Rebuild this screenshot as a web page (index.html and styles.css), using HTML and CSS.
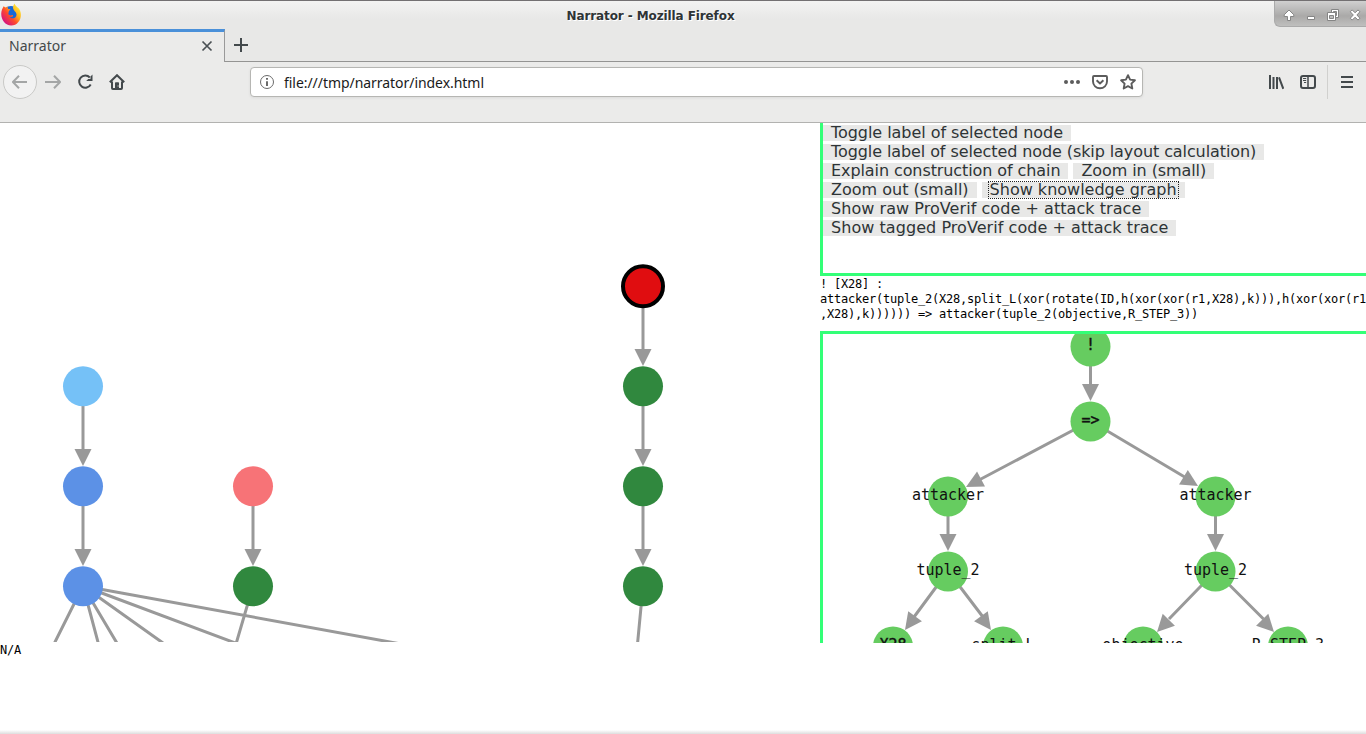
FILE: index.html
```html
<!DOCTYPE html>
<html lang="en">
<head>
<meta charset="utf-8">
<title>Narrator</title>
<link rel="stylesheet" href="styles.css">
</head>
<body>
<div class="window">
  <header class="titlebar">
    <svg class="logo" viewBox="0 0 22 27">
      <defs>
        <linearGradient id="flame" x1="0.9" y1="0.1" x2="0.15" y2="0.85">
          <stop offset="0" stop-color="#fff036"/><stop offset="0.35" stop-color="#ffb01c"/><stop offset="0.62" stop-color="#ff4a2b"/><stop offset="1" stop-color="#d5127f"/>
        </linearGradient>
      </defs>
      <circle cx="11" cy="13" r="8" fill="#1668d8"/>
      <path d="M2 8.500 3.600 5.200 5.500 6.500 7.500 5.500l.6 2.400 2.400.3-1.700 2-.5 3 2.200 1.300 2.300-.4c1.100 2-2.600 2.600-3.300 1.800 2 2.800 7.300 1.300 7-2.500-.1-2.800-2.800-3.300-3.500-6.500 0-1.300.7-3.300 1.600-4.400C15 5 18.500 6.500 19.500 8.500c3.800 7-.6 16-8.300 16C4 24.500-.7 16 2 8.500Z" fill="url(#flame)"/>
    </svg>
    <div class="title">Narrator - Mozilla Firefox</div>
    <div class="controls">
      <svg viewBox="0 0 92 27" class="controls-icons">
        <g fill="#fff" stroke="#858585" stroke-width="1">
          <path d="M15 10 19.800 14.800V16.500H16.500V20.500h-3V16.500H10.200V14.800Z"/>
          <path d="M33.500 16.500h7v3h-7z"/>
          <path d="M57.500 9.500h7v8h-7z"/><path d="M59.500 11.500h3v4h-3z" fill="#aaa"/>
          <path d="M53.500 12.500h8v8h-8z"/><path d="M55.500 15.500h4v3h-4z" fill="#bbb"/>
          <path d="m76.300 11.800 1.900-1.900 2.900 2.900 2.900-2.900 1.900 1.900-3 3.200 3 3.200-1.900 1.900-2.900-2.900-2.900 2.900-1.900-1.900 3-3.200Z"/>
        </g>
      </svg>
    </div>
  </header>
  <div class="tabbar">
    <div class="tab"><span>Narrator</span>
      <svg class="tab-close" viewBox="0 0 12 12"><path d="m1.500 1.500 9 9m0-9-9 9" fill="none" stroke="#4a5054" stroke-width="1.700"/></svg>
    </div>
    <div class="tabs-rest"><svg class="plus" viewBox="0 0 16 16"><path d="M8 1v14M1 8h14" stroke="#43494c" stroke-width="2"/></svg></div>
  </div>
  <nav class="toolbar">
    <div class="back"><svg viewBox="0 0 16 16"><path d="M15 8H1.500M7 1.800.9 8 7 14.200" class="dim"/></svg></div>
    <svg class="icon" viewBox="0 0 16 16"><path d="M0 8h14.500M9 1.800 15.100 8 9 14.200" class="dim"/></svg>
    <svg class="icon" viewBox="0 0 16 16"><path d="M12.800 3.500A6.100 6.100 0 1 0 13.700 10.500" class="dark"/><path d="M15.500.6v6.300H9.200l2-2H13.500V2.600Z" fill="#43494c"/></svg>
    <svg class="icon" viewBox="0 0 16 16"><path d="M.8 8.300 8 1.200l7.200 7.100M3 7.500v6.600q0 .9.900.9h8.200q.9 0 .9-.9V7.500" class="dark"/><path d="M6 15.500V9q0-.8.8-.8h2.400q.8 0 .8.800v6.500" fill="#43494c"/><path d="M8.600 11.500h1v1h-1z" fill="#eee"/></svg>
    <div class="urlbar">
      <svg class="info" viewBox="0 0 16 16"><circle cx="8" cy="8" r="6.500" fill="none" stroke="#6b6b6b" stroke-width="1"/><path d="M8 7.200V12M8 4v1.800" stroke="#5b5b5b" stroke-width="1.800"/></svg>
      <span class="url">file:///tmp/narrator/index.html</span>
      <svg class="icon" viewBox="0 0 16 16"><g fill="#5c5c5c"><circle cx="2" cy="8" r="2"/><circle cx="8" cy="8" r="2"/><circle cx="14" cy="8" r="2"/></g></svg>
      <svg class="icon" viewBox="0 0 16 16"><path d="M2 2h12q1 0 1 1v4.500a7 6.800 0 0 1-14 0V3q0-1 1-1Z" class="gray"/><path d="m4.600 6.300 3.400 3.200 3.400-3.200" class="gray"/></svg>
      <svg class="icon" viewBox="0 0 16 16"><path d="m8 1.200 2.100 4.400 4.800.7-3.500 3.300.9 4.900L8 12.200l-4.300 2.300.9-4.900L1.100 6.300l4.800-.7Z" class="gray"/></svg>
    </div>
    <div class="tools">
      <svg class="icon" viewBox="0 0 16 16"><path d="M2 1v14M5.500 3v12M9 3v12M11 3.300l4.300 11.500" class="dark"/></svg>
      <svg class="icon" viewBox="0 0 16 16"><rect x="1" y="2" width="14" height="12" rx="2" class="dark"/><path d="M8 2v12" stroke="#43494c" stroke-width="1.500"/><path d="M3 4.500h3.200M3 6.500h3.200M4 8.500h2.200" stroke="#43494c"/></svg>
      <svg class="icon menu" viewBox="0 0 16 16"><path d="M2 3h12M2 8h12M2 13h12" class="dark"/></svg>
    </div>
  </nav>
  <main class="page">
    <section class="left">
      <svg class="graph" viewBox="0 123 820 519">
        <defs><path id="tip" d="M-8.500-17H8.500L0 0Z"/></defs>
        <g class="edges">
          <path d="M83 386v70M83 486v70M253 486v70M643 286v70M643 386v70M643 486v70"/>
          <path d="M83 586 54 644M83 586l15.500 58M83 586l34.500 58M83 586l80 57M83 586l155 58M83 586l318 58M253 586l-17 58M643 586l-5.500 58"/>
        </g>
        <g fill="#999">
          <use href="#tip" x="83" y="466"/><use href="#tip" x="83" y="566"/><use href="#tip" x="253" y="566"/>
          <use href="#tip" x="643" y="366"/><use href="#tip" x="643" y="466"/><use href="#tip" x="643" y="566"/>
        </g>
        <circle cx="83" cy="386.300" r="20" fill="#75c1f7"/>
        <circle cx="83" cy="486.300" r="20" fill="#5c91e6"/>
        <circle cx="83" cy="586.300" r="20" fill="#5c91e6"/>
        <circle cx="253" cy="486.300" r="20" fill="#f77377"/>
        <circle cx="253" cy="586.300" r="20" fill="#30883e"/>
        <circle cx="643" cy="286.300" r="20" fill="#e00d10" stroke="#000" stroke-width="4"/>
        <circle cx="643" cy="386.300" r="20" fill="#30883e"/>
        <circle cx="643" cy="486.300" r="20" fill="#30883e"/>
        <circle cx="643" cy="586.300" r="20" fill="#30883e"/>
      </svg>
      <div class="status">N/A</div>
    </section>
    <section class="right">
      <div class="panel actions">
        <div class="row snug"><button>Toggle label of selected node</button></div>
        <div class="row tight"><button>Toggle label of selected node (skip layout calculation)</button></div>
        <div class="row tight"><button>Explain construction of chain</button><button>Zoom in (small)</button></div>
        <div class="row"><button>Zoom out (small)</button><button class="focused"><span>Show knowledge graph</span></button></div>
        <div class="row loose"><button>Show raw ProVerif code + attack trace</button></div>
        <div class="row loose"><button>Show tagged ProVerif code + attack trace</button></div>
      </div>
      <pre class="formula">! [X28] :
attacker(tuple_2(X28,split_L(xor(rotate(ID,h(xor(xor(r1,X28),k))),h(xor(xor(r1
,X28),k)))))) =&gt; attacker(tuple_2(objective,R_STEP_3))</pre>
      <div class="panel tree">
        <svg class="graph" viewBox="823 334 543 309">
          <g class="edges">
            <path d="M1090.500 346v45M1090.500 421 980 479.500M1090.500 421l95 56.500M948 496v45M1215.500 496v45M948 571l-34 46M948 571l35 46M1215.500 571l-46.500 48M1215.500 571l48 48"/>
          </g>
          <g fill="#999">
            <use href="#tip" transform="translate(1090.500 401)"/>
            <use href="#tip" transform="translate(966 487) rotate(62.200)"/>
            <use href="#tip" transform="translate(1198 486) rotate(-59)"/>
            <use href="#tip" transform="translate(948 551)"/>
            <use href="#tip" transform="translate(1215.500 551)"/>
            <use href="#tip" transform="translate(905 630) rotate(36.300)"/>
            <use href="#tip" transform="translate(991 630) rotate(-36.300)"/>
            <use href="#tip" transform="translate(1157 632) rotate(44)"/>
            <use href="#tip" transform="translate(1274 632) rotate(-44)"/>
          </g>
          <g fill="#66cc60">
            <circle cx="1090.500" cy="346.500" r="20"/><circle cx="1090.500" cy="421.500" r="20"/>
            <circle cx="948" cy="496.500" r="20"/><circle cx="1215.500" cy="496.500" r="20"/>
            <circle cx="948" cy="571.500" r="20"/><circle cx="1215.500" cy="571.500" r="20"/>
            <circle cx="893" cy="646.500" r="20"/><circle cx="1003" cy="646.500" r="20"/>
            <circle cx="1143" cy="646.500" r="20"/><circle cx="1288" cy="646.500" r="20"/>
          </g>
          <g class="labels">
            <text x="1090.500" y="350" class="strong">!</text><text x="1090.500" y="425" class="strong">=&gt;</text>
            <text x="948" y="500">attacker</text><text x="1215.500" y="500">attacker</text>
            <text x="948" y="575">tuple_2</text><text x="1215.500" y="575">tuple_2</text>
            <text x="893" y="650" class="strong">X28</text><text x="1003" y="650">split_L</text>
            <text x="1143" y="650">objective</text><text x="1288" y="650">R_STEP_3</text>
          </g>
        </svg>
      </div>
    </section>
  </main>
</div>
</body>
</html>
```

FILE: styles.css
```css
* { box-sizing: border-box; }
body { margin: 0; background: #fff; font-family: "Noto Sans", sans-serif; color: #2e3436; }
svg { display: block; flex: none; }
.window { width: 1366px; height: 734px; overflow: hidden; display: flex; flex-direction: column; }

.titlebar { height: 29px; flex: none; display: grid; grid-template-columns: 92px 1fr 92px; border-top: 1px solid #737072; background: linear-gradient(#f3f3f2, #e8e8e7 18px); }
.logo { width: 22px; height: 27px; }
.title { text-align: center; font: bold 12px/30px "DejaVu Sans", sans-serif; text-shadow: 1px 1px 0 #fff; padding-right: 65px; white-space: nowrap; letter-spacing: -0.1px; }
.controls { height: 26px; border: solid #aaa; border-width: 0 0 1px 1px; border-radius: 0 0 0 6px; background: linear-gradient(#d0d0d0, #aaa9a8 15px, #bfbfbe); }
.controls-icons { width: 92px; height: 27px; margin: -1px 0 0 -1px; }

.tabbar { height: 33px; flex: none; display: flex; background: #e8e8e7; }
.tab { width: 225px; display: flex; justify-content: space-between; align-items: center; padding: 0 11px 3px 9px; background: #ebebea; border-top: 3px solid #4a90d9; border-right: 1px solid #999; font-size: 14px; color: #43494b; }
.tab-close { width: 12px; height: 12px; }
.tabs-rest { flex: 1; border-top: 1px solid #e8e8e7; border-bottom: 1px solid #949493; padding: 7px 0 0 8px; }
.plus { width: 16px; height: 16px; }

.toolbar { height: 61px; flex: none; display: flex; align-items: center; padding: 0 11px 21px 3px; background: #ebebea; border-bottom: 1px solid #b2b2b0; }
.back { width: 34px; height: 34px; border: 1px solid #c9c9c7; border-radius: 50%; background: #f2f2f2; display: grid; place-items: center; margin-right: 8px; }
.back svg, .icon { width: 16px; height: 16px; }
.toolbar > .icon { margin-right: 16px; }
.dim { fill: none; stroke: #a4a6a6; stroke-width: 2; }
.dark { fill: none; stroke: #43494c; stroke-width: 2; }
.gray { fill: none; stroke: #5c5c5c; stroke-width: 1.9; stroke-linejoin: round; }
.urlbar { width: 893px; height: 30px; margin-left: 109px; display: flex; align-items: center; gap: 12px; padding: 0 6px 0 8px; border: 1px solid #b6b6b3; border-radius: 4px; background: #fff; box-shadow: 0 1px 3px #0001; }
.info { width: 16px; height: 16px; }
.url { flex: 1; margin-left: -3px; padding-top: 2px; font-size: 14px; letter-spacing: -0.05px; color: #1a1a1a; }
.tools { margin-left: auto; display: flex; align-items: center; gap: 16px; }
.menu { box-sizing: content-box; padding: 9px 0 9px 11px; margin-left: -5px; border-left: 1px solid #d0d0ce; }

.page { flex: 1; display: grid; grid-template-columns: 820px 546px; background: linear-gradient(to top, #ddd, #fff 4px); }
.left .graph { width: 820px; height: 519px; }
.status, .formula { margin: 0; padding-top: 1px; font: 12px/15px "DejaVu Sans Mono", monospace; letter-spacing: -0.224px; color: #000; }
.edges path { fill: none; stroke: #999; stroke-width: 3; }
.panel { border: solid #33ff77; overflow: hidden; }
.actions { height: 153px; border-width: 0 0 3px 3px; padding-top: 2px; }
.row { display: flex; gap: 5px; height: 19px; }
.row button { height: 16px; border: 0; border-radius: 0; padding: 0 8px; background: #e8e8e7; color: #2e3436; font: 16px/16px "DejaVu Sans", sans-serif; letter-spacing: inherit; white-space: nowrap; overflow: visible; }
.snug { letter-spacing: -0.05px; }
.tight { letter-spacing: -0.09px; }
.loose { letter-spacing: 0.055px; }
.row .focused { letter-spacing: 0; }
.focused span { display: block; margin: 0 -1px; padding: 0 1px; outline: 1px dotted #222; outline-offset: 0; }
.formula { height: 55px; }
.tree { height: 312px; border-width: 3px 0 0 3px; }
.tree .graph { width: 543px; height: 309px; }
.labels { font: 15px "DejaVu Sans Mono", monospace; text-anchor: middle; fill: #111; }
.strong { stroke: #111; stroke-width: 0.4px; }
```
